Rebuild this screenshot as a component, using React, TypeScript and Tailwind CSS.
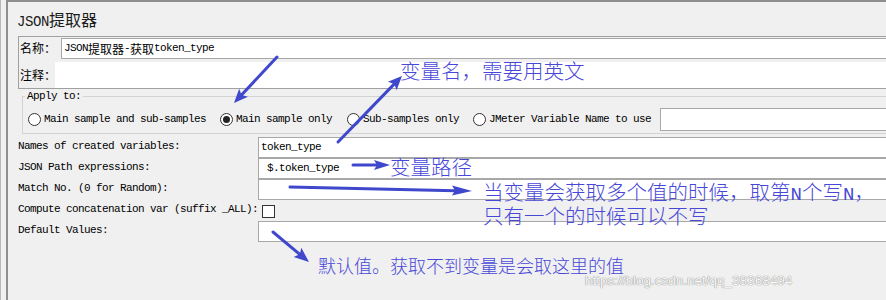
import React from "react";

const MONO = "font-['Liberation_Mono','Noto_Sans_CJK_SC',monospace] text-[11px] tracking-[-0.6px]";

function Cjk({ children }: { children: React.ReactNode }) {
  return (
    <span className="font-['Noto_Sans_CJK_SC',sans-serif] text-[12px] tracking-normal">{children}</span>
  );
}

function Radio({ checked = false }: { checked?: boolean }) {
  return (
    <span className="w-[13px] h-[13px] shrink-0 rounded-full border border-[#333] bg-white flex items-center justify-center">
      {checked && <span className="w-[7px] h-[7px] rounded-full bg-[#222]" />}
    </span>
  );
}

function Arrow({ x1, y1, x2, y2, len = 15, hw = 5 }: { x1: number; y1: number; x2: number; y2: number; len?: number; hw?: number }) {
  const dx = x2 - x1;
  const dy = y2 - y1;
  const L = Math.hypot(dx, dy);
  const ux = dx / L;
  const uy = dy / L;
  const nx = -uy;
  const ny = ux;
  const bx = x2 - ux * len;
  const by = y2 - uy * len;
  const cx = bx + ux * 3;
  const cy = by + uy * 3;
  const pts = [
    [x2, y2],
    [bx + nx * hw, by + ny * hw],
    [cx, cy],
    [bx - nx * hw, by - ny * hw],
  ]
    .map((p) => p.join(","))
    .join(" ");
  return (
    <g>
      <line x1={x1} y1={y1} x2={cx} y2={cy} stroke="#3F48CC" strokeWidth={3} strokeLinecap="round" />
      <polygon points={pts} fill="#3F48CC" />
    </g>
  );
}

function VarRow({ label, children }: { label: string; children?: React.ReactNode }) {
  return (
    <div className="flex h-[21px]">
      <div className="w-[240px] shrink-0 flex items-center pb-[3px] whitespace-pre">{label}</div>
      <div className="flex-1 border border-[#a8a8a8] bg-white flex items-center pl-[2px] whitespace-pre">{children}</div>
    </div>
  );
}

export default function App() {
  return (
    <div className="relative w-[886px] h-[300px] overflow-hidden bg-[#f0f0f0] border-l border-[#b9b9b9] text-black">
      <div className={`ml-[5px] h-full w-[930px] border-l-2 border-t-2 border-[#8e8e8e] ${MONO}`}>
        {/* Title */}
        <div className="h-[34px] pl-[9px] pt-[7px] leading-[20px] text-[#1a1a1a] whitespace-nowrap">
          <span className="font-['Liberation_Mono',monospace] text-[14px] tracking-[-0.4px]">JSON</span>
          <span className="font-['Noto_Sans_CJK_SC',sans-serif] text-[16px] tracking-normal">提取器</span>
        </div>

        {/* Name / comment panel */}
        <div className="ml-[10px] border-t border-l border-b border-[#a0a0a0]">
          <div className="flex h-[22px]">
            <div className="w-[42px] shrink-0 pl-[1px] flex items-center whitespace-nowrap">
              <Cjk>名称：</Cjk>
            </div>
            <div className="mt-[1px] h-[21px] flex-1 border border-[#a8a8a8] bg-white flex items-center pl-[2px] whitespace-pre">
              JSON<Cjk>提取器</Cjk>-<Cjk>获取</Cjk>token_type
            </div>
          </div>
          <div className="h-[3px]" />
          <div className="flex h-[26px]">
            <div className="w-[36px] shrink-0 pl-[1px] flex items-center whitespace-nowrap">
              <Cjk>注释：</Cjk>
            </div>
            <div className="flex-1 bg-white" />
          </div>
        </div>

        {/* Apply to */}
        <fieldset className="ml-[14px] mt-[1px] h-[44px] border border-[#d3d3d3]">
          <legend className="ml-[2px] px-[2px] leading-[12px] whitespace-pre">Apply to:</legend>
          <div className="flex items-center h-[20px] mt-[7px] pl-[5px] whitespace-pre">
            <div className="flex items-center gap-[3px] mr-[14px]">
              <Radio />
              <span>Main sample and sub-samples</span>
            </div>
            <div className="flex items-center gap-[3px] mr-[15px]">
              <Radio checked />
              <span>Main sample only</span>
            </div>
            <div className="flex items-center gap-[3px] mr-[14px]">
              <Radio />
              <span>Sub-samples only</span>
            </div>
            <div className="flex items-center gap-[3px] mr-[9px]">
              <Radio />
              <span>JMeter Variable Name to use</span>
            </div>
            <div className="h-[23px] flex-1 border border-[#a8a8a8] bg-white" />
          </div>
        </fieldset>

        {/* Variables */}
        <div className="mt-[3px] pl-[10px]">
          <VarRow label="Names of created variables:">token_type</VarRow>
          <VarRow label="JSON Path expressions:">{" $.token_type"}</VarRow>
          <VarRow label="Match No. (0 for Random):" />
          <div className="flex h-[21px]">
            <div className="w-[240px] shrink-0 flex items-center pb-[3px] whitespace-pre">
              Compute concatenation var (suffix _ALL):
            </div>
            <div className="ml-[4px] mt-[5px] w-[13px] h-[13px] border border-[#333] bg-white" />
          </div>
          <VarRow label="Default Values:" />
        </div>
      </div>

      {/* Annotations */}
      <svg className="absolute left-0 top-0 pointer-events-none" width="886" height="300" viewBox="1 0 886 300">
        <Arrow x1={277} y1={57} x2={234} y2={103} len={14} hw={6} />
        <Arrow x1={338} y1={142} x2={402} y2={76} len={14} hw={6} />
        <Arrow x1={353} y1={165} x2={390} y2={165} len={16} hw={5} />
        <Arrow x1={290} y1={187} x2={472} y2={191} len={20} hw={5} />
        <Arrow x1={273} y1={232} x2={309} y2={262} len={15} hw={6} />
      </svg>

      <div className="absolute left-[399px] top-[59px] leading-[22px] text-[20.5px] font-light text-[#4848d8] font-['Noto_Sans_CJK_SC',sans-serif] whitespace-nowrap">
        变量名，需要用英文
      </div>
      <div className="absolute left-[389px] top-[155px] leading-[22px] text-[20.5px] font-light text-[#4848d8] font-['Noto_Sans_CJK_SC',sans-serif] whitespace-nowrap">
        变量路径
      </div>
      <div className="absolute left-[482px] top-[181px] leading-[20px] text-[20.5px] font-light text-[#4848d8] font-['Noto_Sans_CJK_SC',sans-serif] whitespace-nowrap">
        <div>
          当变量会获取多个值的时候，取第<span className="font-['Liberation_Mono',monospace] text-[19px]">N</span>个写<span className="font-['Liberation_Mono',monospace] text-[19px]">N</span>，
        </div>
        <div>只有一个的时候可以不写</div>
      </div>
      <div className="absolute left-[317px] top-[255px] leading-[20px] text-[18px] font-light text-[#4848d8] font-['Noto_Sans_CJK_SC',sans-serif] whitespace-nowrap">
        默认值。获取不到变量是会取这里的值
      </div>
      <div className="absolute left-[584px] top-[273px] leading-[16px] text-[13.5px] text-[#fafafa] [text-shadow:0_0_1px_#8a8a8a,0_0_1px_#8a8a8a] font-['Liberation_Sans',Arial,sans-serif] whitespace-nowrap">
        https://blog.csdn.net/qq_38368494
      </div>
    </div>
  );
}
